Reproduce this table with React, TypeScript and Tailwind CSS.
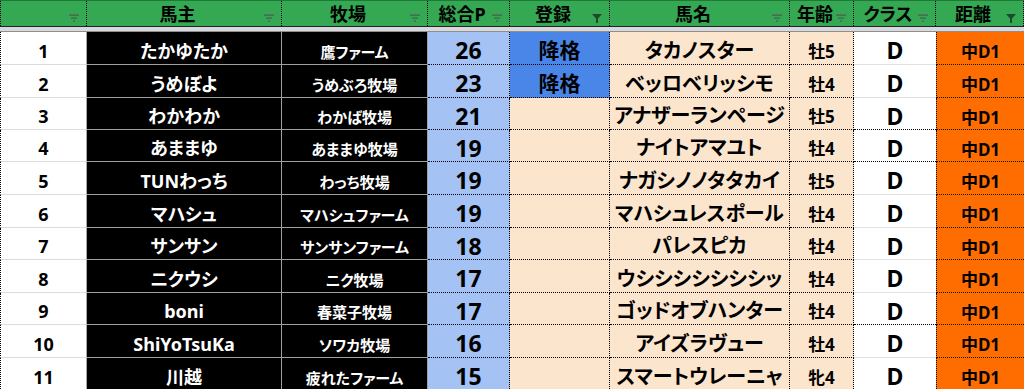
import React from 'react';

type Row = {
  no: number;
  owner: string;
  farm: string;
  points: number;
  status: string;
  horse: string;
  age: string;
  cls: string;
  dist: string;
};

const rows: Row[] = [
  { no: 1, owner: 'たかゆたか', farm: '鷹ファーム', points: 26, status: '降格', horse: 'タカノスター', age: '牡5', cls: 'D', dist: '中D1' },
  { no: 2, owner: 'うめぼよ', farm: 'うめぶろ牧場', points: 23, status: '降格', horse: 'ベッロベリッシモ', age: '牡4', cls: 'D', dist: '中D1' },
  { no: 3, owner: 'わかわか', farm: 'わかば牧場', points: 21, status: '', horse: 'アナザーランページ', age: '牡5', cls: 'D', dist: '中D1' },
  { no: 4, owner: 'あままゆ', farm: 'あままゆ牧場', points: 19, status: '', horse: 'ナイトアマユト', age: '牡4', cls: 'D', dist: '中D1' },
  { no: 5, owner: 'TUNわっち', farm: 'わっち牧場', points: 19, status: '', horse: 'ナガシノノタタカイ', age: '牡5', cls: 'D', dist: '中D1' },
  { no: 6, owner: 'マハシュ', farm: 'マハシュファーム', points: 19, status: '', horse: 'マハシュレスポール', age: '牡4', cls: 'D', dist: '中D1' },
  { no: 7, owner: 'サンサン', farm: 'サンサンファーム', points: 18, status: '', horse: 'パレスピカ', age: '牡4', cls: 'D', dist: '中D1' },
  { no: 8, owner: 'ニクウシ', farm: 'ニク牧場', points: 17, status: '', horse: 'ウシシシシシシシッ', age: '牡4', cls: 'D', dist: '中D1' },
  { no: 9, owner: 'boni', farm: '春菜子牧場', points: 17, status: '', horse: 'ゴッドオブハンター', age: '牡4', cls: 'D', dist: '中D1' },
  { no: 10, owner: 'ShiYoTsuKa', farm: 'ソワカ牧場', points: 16, status: '', horse: 'アイズラヴュー', age: '牡4', cls: 'D', dist: '中D1' },
  { no: 11, owner: '川越', farm: '疲れたファーム', points: 15, status: '', horse: 'スマートウレーニャ', age: '牝4', cls: 'D', dist: '中D1' },
];

// row heights alternate so borders land on whole pixels (avg 32.6px)
const rowHeights = ['h-[33px]', 'h-[33px]', 'h-[32px]', 'h-[32px]', 'h-[33px]', 'h-[33px]', 'h-[32px]', 'h-[33px]', 'h-[32px]', 'h-[33px]', 'h-[33px]'];

const grid = 'grid grid-cols-[87px_195px_146px_82px_100px_180px_64px_82px_88px]';

const FilterIcon = ({ active }: { active?: boolean }) =>
  active ? (
    <svg width="10" height="9" viewBox="0 0 10 9" className="shrink-0 mt-[9px]">
      <polygon points="0,0 10,0 6,4.5 6,9 4,9 4,4.5" fill="#1d4a2a" />
    </svg>
  ) : (
    <svg width="10" height="8" viewBox="0 0 10 8" className="shrink-0 mt-[9px]">
      <rect x="0" y="0.5" width="10" height="1.2" fill="#4d5a50" />
      <rect x="2" y="3.5" width="6" height="1.2" fill="#4d5a50" />
      <rect x="4" y="6.5" width="2" height="1.2" fill="#4d5a50" />
    </svg>
  );

const headers: { label: string; active?: boolean }[] = [
  { label: '' },
  { label: '馬主' },
  { label: '牧場' },
  { label: '総合P' },
  { label: '登録', active: true },
  { label: '馬名' },
  { label: '年齢' },
  { label: 'クラス' },
  { label: '距離', active: true },
];

const dottedH = new Set([3, 4, 9]);

const cell = 'flex items-center justify-center leading-none pt-[5px]';

const App = () => {
  return (
    <div
      className="w-[1024px] h-[389px] overflow-hidden bg-white font-bold text-black [font-feature-settings:'palt']"
      style={{ fontFamily: '"Noto Sans", "Noto Sans CJK JP", sans-serif' }}
    >
      {/* header */}
      <div className={`${grid} h-[27px] bg-[#34a853] border-t border-[#1f7a3a] border-b border-b-[#222]`}>
        {headers.map((h, i) => (
          <div
            key={i}
            className={`flex items-center pr-[7px] border-r border-dotted border-black ${i === 0 ? 'border-l' : ''}`}
          >
            <span className="flex-1 text-center text-[18px] leading-none pl-[4px]">{h.label}</span>
            <FilterIcon active={h.active} />
          </div>
        ))}
      </div>
      <div className="h-[5px] bg-[#d6d8db] border-b border-[#8e8e8e]" />

      {/* rows */}
      {rows.map((r, idx) => (
        <div key={r.no} className={`${grid} ${rowHeights[idx]}`}>
          <div className={`${cell} bg-white border-l border-l-black border-dotted border-b border-b-[#dcdcdc] border-r border-r-[#a8a8a8] text-[18px]`} style={{ borderBottomStyle: 'solid', borderRightStyle: 'solid' }}>
            {r.no}
          </div>
          <div className={`${cell} bg-black text-white border-b border-r border-[#a0a0a0] text-[18px]`}>
            {r.owner}
          </div>
          <div className={`${cell} bg-black text-white border-b border-r border-[#a0a0a0] text-[15px] pt-[8px]`}>
            {r.farm}
          </div>
          <div className={`${cell} bg-[#a4c2f4] border-b border-r border-dotted border-black text-[23px] pt-[2px]`}>
            {r.points}
          </div>
          <div
            className={`${cell} border-b border-r border-dotted border-black text-[21px] pt-[2px] ${
              r.status ? 'bg-[#4a86e8]' : 'bg-[#fce5cd]'
            }`}
          >
            {r.status}
          </div>
          <div className={`${cell} bg-[#fce5cd] border-b border-r border-dotted border-black text-[20px] whitespace-nowrap overflow-hidden`}>
            {r.horse}
          </div>
          <div className={`${cell} bg-[#fce5cd] border-b border-r border-dotted border-black text-[17px] pt-[6px]`}>
            {r.age}
          </div>
          <div
            className={`${cell} bg-white border-b text-[23px] pt-[1px] ${
              dottedH.has(r.no) ? 'border-dotted border-black' : 'border-[#e2e2e2]'
            }`}
          >
            {r.cls}
          </div>
          <div className={`${cell} bg-[#ff6d01] border-b border-l border-dotted border-black text-[17px] pt-[7px]`}>
            {r.dist}
          </div>
        </div>
      ))}
    </div>
  );
};

export default App;
